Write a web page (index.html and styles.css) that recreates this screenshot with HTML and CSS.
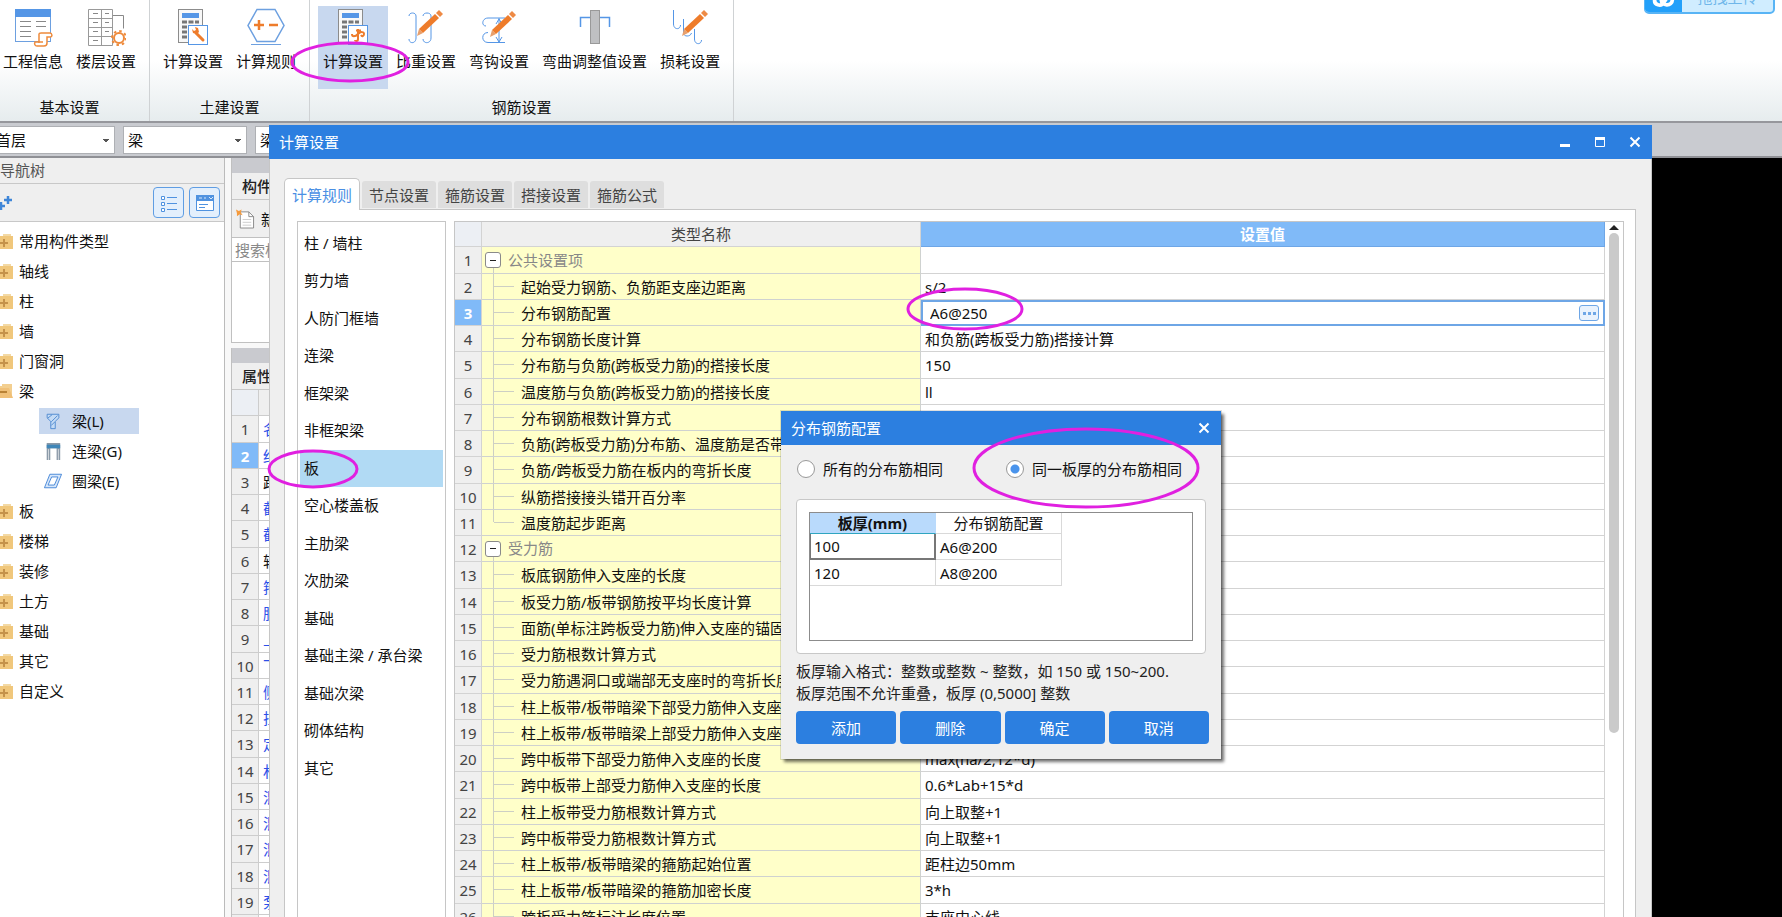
FILE: index.html
```html
<!DOCTYPE html>
<html lang="zh-CN">
<head>
<meta charset="utf-8">
<title>计算设置</title>
<link rel="stylesheet" href="styles.css">
</head>
<body>
<svg class="defs" width="0" height="0" aria-hidden="true">
  <symbol id="folder" viewBox="0 0 20 16"><path d="M10 3V1h8v2z" fill="#f3d9a4"/><path d="M0 3h20v13H0z" fill="#f0c77c"/><path d="M11 6v8M7 10h8" stroke="#c4924a" stroke-width="2"/></symbol>
  <symbol id="folder-open" viewBox="0 0 20 16"><path d="M9 3V1h10v14H0V3z" fill="#f3cf90"/><path d="M0 5h16l4 10H0z" fill="#f0c078"/><path d="M7 9h7" stroke="#b98235" stroke-width="2"/></symbol>
  <symbol id="calc" viewBox="0 0 40 40"><rect x="5.500" y="2.500" width="24" height="33" fill="#f8f8f8" stroke="#8c8c8c"/><rect x="9" y="6" width="17" height="5" fill="#5596e6"/><path d="M9 15h5M15.500 15h5M22 15h4M9 20h5M9 25h5M9 30h5" stroke="#777" stroke-width="3"/><rect x="15.500" y="18.500" width="19" height="19" fill="#fff" stroke="#5596e6"/></symbol>
  <symbol id="pencil" viewBox="0 0 28 28"><path d="M1 27l2-7 4 4z" fill="#e7a06e"/><path d="M3 20L19 5l4 4L7 24z" fill="#ee7c2b"/><path d="M20 4l3-3 4 4-3 3z" fill="#ee8a45"/></symbol>
  <symbol id="close" viewBox="0 0 12 12"><path d="M1.500 1.500l9 9M10.500 1.500l-9 9" stroke="#fff" stroke-width="2"/></symbol>
</svg>

<header class="ribbon">
  <section class="group group-first">
    <div class="tools">
      <button class="tool"><svg viewBox="0 0 40 40"><rect x="2.500" y="2.500" width="35" height="32" fill="#fff" stroke="#6da0e0"/><path d="M2 2h36v8H2z" fill="#5596e6"/><path d="M7 14.500h11M23 14.500h10M7 19.500h11M23 19.500h10M7 24.500h11M7 29.500h11" stroke="#888"/><path d="M26 36V27c0-1 1-1 2-1h9c2 0 3 4 0 4h-3v6c0 2-1 3-3 3h-7c-2 0-3-2-2-4h8" fill="#fff" stroke="#ee8a3b" stroke-width="1.500"/></svg>工程信息</button>
      <button class="tool"><svg viewBox="0 0 40 40"><path d="M2.500 2.500h24v36h-24zM15.500 2.500v36M2.500 11.500h24M2.500 20.500h24M2.500 29.500h24" fill="#fff" stroke="#999"/><path d="M7 6.500h5M7 15.500h5M7 24.500h5M7 33.500h5M19 6.500h4M19 15.500h4M19 24.500h4M27 8.500h10.500v13" fill="none" stroke="#888"/><circle cx="33" cy="31" r="5" fill="#fff" stroke="#ee8a3b" stroke-width="2"/><circle cx="33" cy="31" r="7" fill="none" stroke="#ee8a3b" stroke-width="2" stroke-dasharray="2.500 3"/></svg>楼层设置</button>
    </div>
    <h2>基本设置</h2>
  </section>
  <section class="group">
    <div class="tools">
      <button class="tool"><svg viewBox="0 0 40 40"><use href="#calc"/><path d="M23 26l7 7" stroke="#ee7c2b" stroke-width="3" stroke-linecap="round"/><path d="M19 22l1 4 4 1 2-2-1-4-3-1 1 3-2 1z" fill="#ee7c2b"/></svg>计算设置</button>
      <button class="tool"><svg viewBox="0 0 40 40"><path d="M11 2.500h18l9 16-9 16H11l-9-16z" fill="#fff" stroke="#6da0e0" stroke-width="1.500"/><path d="M8 18h10M13 13v10M23 18h9" stroke="#ee7c2b" stroke-width="2.500"/><path d="M5 37.500h30" stroke="#6da0e0"/></svg>计算规则</button>
    </div>
    <h2>土建设置</h2>
  </section>
  <section class="group">
    <div class="tools">
      <button class="tool active"><svg viewBox="0 0 40 40"><use href="#calc"/><path d="M25 22v10c0 3-3 2-3 1M19 27c0 3 3 3 6 0s6-2 6 0-2 3-3 1M23 23.500h5" fill="none" stroke="#ee7c2b" stroke-width="2"/></svg>计算设置</button>
      <button class="tool"><svg viewBox="0 0 40 40"><path d="M3 9c0-4 7-4 7 0v22c0 6-7 6-7 1M17 9c0-4 8-4 8 0v22c0 6-8 6-8 1" fill="none" stroke="#5596e6"/><use href="#pencil" x="10" y="2" width="28" height="28"/></svg>比重设置</button>
      <button class="tool"><svg viewBox="0 0 40 40"><path d="M26 11H9c-6 0-7 8-2 8M26 35.500H9c-7 0-7-10 0-10M20 11v24M17 17l3-5 3 5M17 30l3 5 3-5" fill="none" stroke="#5596e6"/><use href="#pencil" x="10" y="3" width="28" height="28"/></svg>弯钩设置</button>
      <button class="tool"><svg viewBox="0 0 40 40"><path d="M5.500 20v-9.500h29V20" fill="none" stroke="#5596e6" stroke-width="1.500"/><rect x="15.500" y="3.500" width="9" height="33" fill="#bfc0c2" stroke="#999"/></svg>弯曲调整值设置</button>
      <button class="tool"><svg viewBox="0 0 40 40"><path d="M3.500 3v14c0 6 7 6 7 1M13.500 12v14c0 4 7 4 8 0M24.500 22v10c0 6 7 6 7 1" fill="none" stroke="#5596e6"/><use href="#pencil" x="11" y="2" width="28" height="28"/></svg>损耗设置</button>
    </div>
    <h2>钢筋设置</h2>
  </section>
  <button class="upload"><span class="upload-logo"><svg viewBox="0 0 28 20"><path d="M4 9c-1 6 7 8 10 3l5-8M11 9c0 7 12 8 12 0" fill="none" stroke="#fff" stroke-width="4" stroke-linecap="round"/></svg></span><span class="upload-text">拖拽上传</span></button>
</header>

<div class="selectors">
  <select class="combo combo-floor" aria-label="楼层"><option>首层</option></select>
  <select class="combo" aria-label="构件类型"><option>梁</option></select>
  <select class="combo" aria-label="构件"><option>梁</option></select>
</div>

<main class="workspace">
  <aside class="nav">
    <h2 class="nav-title">导航树</h2>
    <div class="nav-bar">
      <svg class="plus" viewBox="0 0 14 14"><path d="M8 0v8M4 4h8M1 6v8M-3 10h8" stroke="#3f86d8" stroke-width="2.500"/></svg>
      <button class="square" aria-label="列表"><svg viewBox="0 0 18 18"><path d="M7 3.500h10M7 9.500h10M7 15.500h10" stroke="#4f92e0"/><path d="M1.500 2.500h3v3h-3zM1.500 8.500h3v3h-3zM1.500 14.500h3v3h-3z" fill="#fff" stroke="#4f92e0"/></svg></button>
      <button class="square" aria-label="面板"><svg viewBox="0 0 18 18"><path d="M.500 1.500h17v15H.500z" fill="#fff" stroke="#4f92e0"/><path d="M0 1h18v6H0z" fill="#4f92e0"/><path d="M3 4h3M8 4h2M13 3l2 2 2-2" stroke="#d6e7fa" fill="none"/><path d="M3 10.500h9M3 13.500h6" stroke="#4f92e0"/></svg></button>
    </div>
    <ul class="tree">
      <li><svg><use href="#folder"/></svg>常用构件类型</li>
      <li><svg><use href="#folder"/></svg>轴线</li>
      <li><svg><use href="#folder"/></svg>柱</li>
      <li><svg><use href="#folder"/></svg>墙</li>
      <li><svg><use href="#folder"/></svg>门窗洞</li>
      <li><svg><use href="#folder-open"/></svg>梁</li>
      <li class="leaf selected"><svg viewBox="0 0 20 20"><path d="M3.500 2.500h13v4l-4 4v8h-5v-8l-4-4z" fill="#c4dbf5" stroke="#4b87cf"/><path d="M4 7l5-4M8 11l7-7M8 15l4-4" stroke="#4b87cf"/></svg>梁(L)</li>
      <li class="leaf"><svg viewBox="0 0 20 20"><path d="M3 1h15v19h-4V7H7v13H3z" fill="#8b9aa8"/><path d="M3 3h15v4H3z" fill="#3f86b8"/><path d="M5 8v12M16 8v12" stroke="#d8dde2"/></svg>连梁(G)</li>
      <li class="leaf"><svg viewBox="0 0 20 20"><path d="M6.500 2.500h13l-6 15h-13zM8.500 5.500l-4 9h7l4-9z" fill="#d7e7fa" fill-rule="evenodd" stroke="#3f82d6"/></svg>圈梁(E)</li>
      <li><svg><use href="#folder"/></svg>板</li>
      <li><svg><use href="#folder"/></svg>楼梯</li>
      <li><svg><use href="#folder"/></svg>装修</li>
      <li><svg><use href="#folder"/></svg>土方</li>
      <li><svg><use href="#folder"/></svg>基础</li>
      <li><svg><use href="#folder"/></svg>其它</li>
      <li><svg><use href="#folder"/></svg>自定义</li>
    </ul>
  </aside>
  <section class="middle">
    <div class="component">
      <div class="strip"></div>
      <h2 class="pane-title">构件</h2>
      <button class="new"><svg viewBox="0 0 20 20"><path d="M4.500 2.500h9l5 5v12h-14z" fill="#fff" stroke="#888"/><path d="M13.500 2.500v5h5" fill="none" stroke="#888"/><path d="M7 10.500h9M7 13.500h9M7 16.500h9" stroke="#ccc"/><path d="M0 0l3 1.500L6 0 5 3l2 3-3-1-3 2v-3z" fill="#f59a3c"/></svg>新建</button>
      <input class="search" type="text" placeholder="搜索构件..." aria-label="搜索构件">
    </div>
    <div class="property">
      <div class="strip"></div>
      <h2 class="pane-title">属性</h2>
      <table class="props">
        <thead><tr><th></th><th></th></tr></thead>
        <tbody>
          <tr><th>1</th><td>名称</td></tr>
          <tr class="current"><th>2</th><td>结构</td></tr>
          <tr class="plain"><th>3</th><td>跨数</td></tr>
          <tr><th>4</th><td>截面</td></tr>
          <tr><th>5</th><td>截面</td></tr>
          <tr class="plain"><th>6</th><td>轴线</td></tr>
          <tr><th>7</th><td>箍筋</td></tr>
          <tr><th>8</th><td>肢数</td></tr>
          <tr><th>9</th><td>上部</td></tr>
          <tr><th>10</th><td>下部</td></tr>
          <tr><th>11</th><td>侧面</td></tr>
          <tr><th>12</th><td>拉筋</td></tr>
          <tr><th>13</th><td>定额</td></tr>
          <tr><th>14</th><td>材质</td></tr>
          <tr><th>15</th><td>混凝</td></tr>
          <tr><th>16</th><td>混凝</td></tr>
          <tr><th>17</th><td>混凝</td></tr>
          <tr><th>18</th><td>混凝</td></tr>
          <tr><th>19</th><td>泵送</td></tr>
          <tr><th></th><td></td></tr>
        </tbody>
      </table>
    </div>
  </section>
  <div class="canvas"></div>
</main>

<section class="window" role="dialog" aria-label="计算设置">
  <header class="titlebar">
    <h1>计算设置</h1>
    <button aria-label="最小化"><svg viewBox="0 0 12 12"><path d="M1 9.500h10" stroke="#fff" stroke-width="3"/></svg></button>
    <button aria-label="最大化"><svg viewBox="0 0 12 12"><path d="M1.500 2v8.500h9V2" fill="none" stroke="#fff"/><path d="M1 2.500h10" stroke="#fff" stroke-width="3"/></svg></button>
    <button aria-label="关闭"><svg><use href="#close"/></svg></button>
  </header>
  <div class="window-body">
    <nav class="tabs">
      <button class="tab on">计算规则</button>
      <button class="tab">节点设置</button>
      <button class="tab">箍筋设置</button>
      <button class="tab">搭接设置</button>
      <button class="tab">箍筋公式</button>
    </nav>
    <div class="panel">
      <ul class="categories">
        <li>柱 / 墙柱</li>
        <li>剪力墙</li>
        <li>人防门框墙</li>
        <li>连梁</li>
        <li>框架梁</li>
        <li>非框架梁</li>
        <li class="selected">板</li>
        <li>空心楼盖板</li>
        <li>主肋梁</li>
        <li>次肋梁</li>
        <li>基础</li>
        <li>基础主梁 / 承台梁</li>
        <li>基础次梁</li>
        <li>砌体结构</li>
        <li>其它</li>
      </ul>
      <div class="sheet">
        <table class="rules">
          <colgroup><col class="c-num"><col class="c-name"><col></colgroup>
          <thead><tr><th class="corner"></th><th>类型名称</th><th class="picked">设置值</th></tr></thead>
          <tbody>
            <tr class="head"><th>1</th><td><button class="fold" aria-label="折叠"></button>公共设置项</td><td></td></tr>
            <tr><th>2</th><td>起始受力钢筋、负筋距支座边距离</td><td>s/2</td></tr>
            <tr class="current"><th>3</th><td>分布钢筋配置</td><td class="edit"><div class="editor"><input type="text" value="A6@250" aria-label="分布钢筋配置"><button class="more" aria-label="更多"><i></i><i></i><i></i></button></div></td></tr>
            <tr><th>4</th><td>分布钢筋长度计算</td><td>和负筋(跨板受力筋)搭接计算</td></tr>
            <tr><th>5</th><td>分布筋与负筋(跨板受力筋)的搭接长度</td><td>150</td></tr>
            <tr><th>6</th><td>温度筋与负筋(跨板受力筋)的搭接长度</td><td>ll</td></tr>
            <tr><th>7</th><td>分布钢筋根数计算方式</td><td></td></tr>
            <tr><th>8</th><td>负筋(跨板受力筋)分布筋、温度筋是否带弯勾</td><td></td></tr>
            <tr><th>9</th><td>负筋/跨板受力筋在板内的弯折长度</td><td></td></tr>
            <tr><th>10</th><td>纵筋搭接接头错开百分率</td><td></td></tr>
            <tr class="last"><th>11</th><td>温度筋起步距离</td><td></td></tr>
            <tr class="head"><th>12</th><td><button class="fold" aria-label="折叠"></button>受力筋</td><td></td></tr>
            <tr><th>13</th><td>板底钢筋伸入支座的长度</td><td></td></tr>
            <tr><th>14</th><td>板受力筋/板带钢筋按平均长度计算</td><td></td></tr>
            <tr><th>15</th><td>面筋(单标注跨板受力筋)伸入支座的锚固长度</td><td></td></tr>
            <tr><th>16</th><td>受力筋根数计算方式</td><td></td></tr>
            <tr><th>17</th><td>受力筋遇洞口或端部无支座时的弯折长度</td><td></td></tr>
            <tr><th>18</th><td>柱上板带/板带暗梁下部受力筋伸入支座的长度</td><td></td></tr>
            <tr><th>19</th><td>柱上板带/板带暗梁上部受力筋伸入支座的长度</td><td></td></tr>
            <tr><th>20</th><td>跨中板带下部受力筋伸入支座的长度</td><td>max(ha/2,12*d)</td></tr>
            <tr><th>21</th><td>跨中板带上部受力筋伸入支座的长度</td><td>0.6*Lab+15*d</td></tr>
            <tr><th>22</th><td>柱上板带受力筋根数计算方式</td><td>向上取整+1</td></tr>
            <tr><th>23</th><td>跨中板带受力筋根数计算方式</td><td>向上取整+1</td></tr>
            <tr><th>24</th><td>柱上板带/板带暗梁的箍筋起始位置</td><td>距柱边50mm</td></tr>
            <tr><th>25</th><td>柱上板带/板带暗梁的箍筋加密长度</td><td>3*h</td></tr>
            <tr><th>26</th><td>跨板受力筋标注长度位置</td><td>支座中心线</td></tr>
          </tbody>
        </table>
        <div class="scroll"><div class="arrow"></div><div class="thumb"></div></div>
      </div>
    </div>
  </div>
</section>

<section class="dialog" role="dialog" aria-label="分布钢筋配置">
  <header class="titlebar">
    <h1>分布钢筋配置</h1>
    <button aria-label="关闭"><svg><use href="#close"/></svg></button>
  </header>
  <div class="dialog-body">
    <div class="choices">
      <label><input type="radio" name="mode">所有的分布筋相同</label>
      <label><input type="radio" name="mode" checked>同一板厚的分布筋相同</label>
    </div>
    <div class="box">
      <div class="box-inner">
        <table class="thick">
          <thead><tr><th class="picked">板厚(mm)</th><th>分布钢筋配置</th></tr></thead>
          <tbody>
            <tr><td class="focus">100</td><td>A6@200</td></tr>
            <tr><td>120</td><td>A8@200</td></tr>
          </tbody>
        </table>
      </div>
    </div>
    <p class="hint">板厚输入格式：整数或整数 ~ 整数，如 150 或 150~200.<br>板厚范围不允许重叠，板厚 (0,5000] 整数</p>
    <div class="actions">
      <button>添加</button>
      <button>删除</button>
      <button>确定</button>
      <button>取消</button>
    </div>
  </div>
</section>

<svg class="marks" aria-hidden="true">
  <ellipse cx="350" cy="62" rx="58" ry="19"/>
  <ellipse cx="965" cy="309" rx="57" ry="20"/>
  <ellipse cx="313" cy="469" rx="44" ry="18"/>
  <ellipse cx="1086" cy="468" rx="112" ry="39"/>
</svg>
</body>
</html>
```
FILE: styles.css
```css
* { box-sizing: border-box; }
html, body { height: 100%; }
body {
  margin: 0;
  position: relative;
  display: flex;
  flex-direction: column;
  overflow: hidden;
  background: #000;
  color: #111;
  font: 15px/20px "Noto Sans", "Noto Sans CJK SC", sans-serif;
}
h1, h2, p, ul { margin: 0; padding: 0; font-size: 15px; font-weight: 400; }
ul { list-style: none; }
button, input, select { font: inherit; color: inherit; margin: 0; padding: 0; border: 0; background: none; }
table { border-collapse: separate; border-spacing: 0; }
.defs { position: absolute; }

/* ribbon */
.ribbon {
  position: relative;
  flex: none;
  display: flex;
  height: 121px;
  background: linear-gradient(#fff 0, #fff 50%, #e6ecee 100%);
}
.group {
  display: flex;
  flex-direction: column;
  align-items: center;
  justify-content: space-between;
  padding: 6px 8px 4px;
  border-right: 1px solid #cfd2d4;
}
.group-first { margin-left: -10px; }
.tools { display: flex; gap: 3px; }
.tool {
  display: flex;
  flex-direction: column;
  align-items: center;
  gap: 4px;
  height: 83px;
  padding: 1px 5px;
  white-space: nowrap;
}
.tool svg { width: 40px; height: 40px; }
.tool.active { background: #c8d8ef; }
.upload {
  position: absolute;
  top: -18px;
  right: 7px;
  display: flex;
  width: 131px;
  height: 32px;
  border: 1px solid #58b4f5;
  border-width: 1px 2px 2px 1px;
  border-radius: 5px;
  overflow: hidden;
  background: #d0edff;
}
.upload-logo { width: 37px; padding: 8px 4px 0 6px; background: #22a0fa; }
.upload-logo svg { display: block; width: 26px; height: 19px; }
.upload-text { flex: 1; padding-top: 4px; color: #6fb7ea; }

/* selector row */
.selectors {
  flex: none;
  display: flex;
  align-items: center;
  gap: 8px;
  height: 37px;
  border-top: 2px solid #96979c;
  border-bottom: 2px solid #8f9095;
  background: #c9cbd0;
}
.combo {
  appearance: none;
  width: 124px;
  height: 28px;
  padding: 0 4px;
  border: 1px solid #aeb0b4;
  background-color: #fff;
  background-repeat: no-repeat;
  background-image: linear-gradient(to bottom right, #555 50%, transparent 50%), linear-gradient(to bottom left, #555 50%, transparent 50%);
  background-size: 3px 4px, 3px 4px;
  background-position: 114px 12px, 111px 12px;
}
.combo-floor { margin-left: -9px; }

/* workspace */
.workspace { flex: 1; display: flex; min-height: 0; }
.nav { flex: none; width: 225px; border-right: 1px solid #bbb; background: #fff; }
.nav-title { height: 26px; line-height: 25px; background: #efefef; border-bottom: 1px solid #c8c8c8; color: #555; }
.nav-bar {
  display: flex;
  align-items: center;
  gap: 5px;
  height: 38px;
  padding-right: 4px;
  border-bottom: 1px solid #c8c8c8;
  background: #efefef;
}
.plus { width: 14px; height: 14px; margin-right: auto; }
.square {
  display: grid;
  place-items: center;
  width: 31px;
  height: 31px;
  border: 1px solid #5f9de3;
  border-radius: 4px;
  background: #e3effc;
}
.square svg { width: 18px; height: 18px; }
.tree { display: flex; flex-direction: column; padding-top: 4px; }
.tree li { display: flex; align-items: center; gap: 6px; height: 30px; }
.tree svg { width: 20px; height: 16px; margin-left: -7px; }
.tree .leaf { gap: 10px; width: 100px; height: 26px; margin: 2px 0 2px 39px; padding-left: 5px; }
.tree .leaf svg { width: 18px; height: 20px; margin-left: 0; }
.tree .selected { background: #c8d8ef; }

.middle { flex: none; display: flex; flex-direction: column; gap: 5px; width: 320px; padding-left: 6px; background: #f8f8f8; }
.component, .property { border-left: 1px solid #c0c0c0; background: #fff; }
.component { flex: none; height: 185px; border-bottom: 1px solid #c0c0c0; }
.property { flex: 1; min-height: 0; overflow: hidden; }
.strip { height: 15px; background: #c9cacf; }
.pane-title { height: 27px; padding-left: 10px; line-height: 26px; font-weight: 500; background: #efefef; border-bottom: 1px solid #c8c8c8; color: #222; }
.new { display: flex; align-items: center; gap: 6px; width: 100%; height: 37px; padding-left: 4px; background: #efefef; }
.new svg { width: 19px; height: 20px; }
.search { display: block; width: 100%; height: 25px; padding-left: 3px; border: 1px solid #c0c0c0; border-width: 1px 0; }
.search::placeholder { color: #888; }
.props { width: 100%; table-layout: fixed; }
.props th { width: 27px; font-weight: 400; color: #444; background: #efefef; }
.props th, .props td { height: 26px; padding: 0; border: 1px solid #cdcdcd; border-width: 0 1px 1px 0; }
.props tbody tr:nth-child(4n+1) > * { height: 27px; }
.props thead th:first-child { background: #eceff4; }
.props thead tr th:last-child { width: auto; }
.props td { padding-left: 4px; color: #2c50e8; }
.props .plain td { color: #111; }
.props .current th { color: #fff; font-weight: 700; background: #80baf8; }
.canvas { flex: 1; background: #000; }

/* title bars */
.titlebar { display: flex; align-items: center; flex: none; height: 34px; background: #2c7fe0; color: #fff; }
.titlebar h1 { flex: 1; padding-left: 10px; }
.titlebar button { display: grid; place-items: center; width: 35px; height: 34px; }
.titlebar svg { width: 12px; height: 12px; }

/* settings window */
.window {
  position: absolute;
  top: 125px;
  left: 269px;
  right: 130px;
  bottom: 0;
  display: flex;
  flex-direction: column;
  overflow: hidden;
  background: #efefef;
}
.window-body { flex: 1; display: flex; flex-direction: column; min-height: 0; padding: 19px 15px 0 14px; border: 1px solid #c6c6c6; border-width: 0 1px; }
.tabs { display: flex; align-items: flex-end; gap: 2px; height: 31px; }
.tab { height: 27px; padding: 0 7px; margin-bottom: 1px; border-radius: 3px 3px 0 0; background: #dedede; color: #444; }
.tab.on { position: relative; z-index: 1; height: 32px; margin-bottom: -1px; border: 1px solid #c6c6c6; border-bottom: 0; border-radius: 5px 5px 0 0; background: #fff; color: #4a8fe4; }
.panel { flex: 1; display: flex; gap: 8px; min-height: 0; padding: 11px 11px 0 12px; border: 1px solid #c6c6c6; border-bottom: 0; background: #fff; }
.categories { flex: none; width: 149px; padding: 3px 2px; border: 1px solid #c6c6c6; border-bottom: 0; overflow: hidden; }
.categories li { height: 37px; padding-left: 4px; line-height: 37px; }
.categories li:nth-child(even) { height: 38px; }
.categories .selected { background: #b1daf4; }
.sheet { flex: 1; display: flex; align-items: flex-start; min-width: 0; overflow: hidden; border: 1px solid #c6c6c6; border-bottom: 0; }
.rules { flex: 1; table-layout: fixed; width: 0; }
.c-num { width: 27px; }
.c-name { width: 439px; }
.rules th, .rules td { height: 26px; padding: 0; border: 1px solid #d3d3d3; border-width: 0 1px 1px 0; text-align: left; white-space: nowrap; overflow: hidden; }
.rules tbody tr:nth-child(4n+1) > * { height: 27px; }
.rules tbody th, .rules thead th { font-weight: 400; text-align: center; color: #444; background: #efefef; }
.rules thead th { height: 25px; }
.rules thead .corner { background: #eceff4; }
.rules thead .picked { color: #fff; font-weight: 700; background: #80baf8; border-color: #6ea6e6; }
.rules td:nth-child(2) { position: relative; padding-left: 39px; background: #ffffc9; border-color: #cfd2d0; }
.rules td:nth-child(2)::before { content: ""; position: absolute; left: 11px; top: 0; bottom: 0; border-left: 1px solid #cdcfc4; }
.rules td:nth-child(2)::after { content: ""; position: absolute; left: 12px; top: 12px; width: 20px; border-top: 1px solid #cdcfc4; }
.rules .last td:nth-child(2)::before { bottom: 13px; }
.rules .head td:nth-child(2) { padding-left: 3px; color: #888; }
.rules .head td:nth-child(2)::before { top: 21px; }
.rules .head td:nth-child(2)::after { display: none; }
.rules td:last-child { padding-left: 4px; }
.rules tbody .current th { color: #fff; font-weight: 700; background: #80baf8; }
.fold { display: inline-flex; align-items: center; justify-content: center; width: 16px; height: 16px; margin: 0 7px 2px 0; border: 1px solid #8a8a8a; border-radius: 3px; background: #fff; vertical-align: middle; }
.fold::before { content: ""; width: 6px; border-top: 1px solid #222; }
.rules td.edit:last-child { padding: 0; border: 0; }
.editor { display: flex; align-items: center; height: 26px; padding: 0 4px 0 7px; border: 2px solid #6ea6e6; }
.editor input { flex: 1; min-width: 0; height: 20px; outline: 0; }
.more { display: flex; align-items: center; justify-content: center; gap: 2px; width: 20px; height: 16px; border: 1px solid #6ea6e6; border-radius: 3px; background: #e9f2fd; }
.more i { width: 3px; height: 3px; background: #6ea6e6; }
.scroll { flex: none; display: flex; flex-direction: column; align-items: center; gap: 3px; width: 18px; padding-top: 3px; }
.arrow { border: 5px solid transparent; border-top: 0; border-bottom: 5px solid #222; }
.thumb { width: 10px; height: 500px; border-radius: 5px; background: #cacaca; }

/* rebar dialog */
.dialog {
  position: absolute;
  top: 411px;
  left: 781px;
  width: 440px;
  background: #efefef;
  box-shadow: 3px 3px 3px rgba(0, 0, 0, .55), 0 0 0 1px rgba(0, 0, 0, .12);
}
.dialog-body { padding: 14px 12px 15px 15px; }
.choices { display: flex; gap: 55px; padding-left: 1px; }
.choices label { display: flex; align-items: center; gap: 8px; }
.choices input { appearance: none; width: 18px; height: 18px; border: 1px solid #999; border-radius: 50%; background: #fff; }
.choices input:checked { background: radial-gradient(circle, #4a94ec 4px, #fff 5px); }
.choices label:last-child { margin-left: 8px; }
.box { margin: 20px 3px 0 0; padding: 12px; border: 1px solid #c8c8c8; border-radius: 4px; background: #fff; }
.box-inner { height: 129px; border: 1px solid #8c8c8c; }
.thick { width: 252px; table-layout: fixed; }
.thick th, .thick td { height: 26px; padding: 0 4px; border: 1px solid #d9d9d9; border-width: 0 1px 1px 0; text-align: left; }
.thick thead th { height: 21px; padding: 0; line-height: 20px; font-weight: 400; text-align: center; }
.thick thead .picked { font-weight: 700; background: #b9dafc; border-color: #2fa5c0; border-right-color: #b9dafc; }
.thick .focus { padding-left: 3px; border: 1px solid #777; border-width: 0 2px 2px 1px; }
.hint { padding-top: 6px; line-height: 22px; color: #222; }
.actions { display: grid; grid-template-columns: repeat(4, 1fr); gap: 4px; padding-top: 7px; }
.actions button { height: 33px; border-radius: 4px; background: #2c7fe0; color: #fff; }

.marks { position: absolute; inset: 0; width: 100%; height: 100%; pointer-events: none; }
.marks ellipse { fill: none; stroke: #e020e0; stroke-width: 3; }
```
